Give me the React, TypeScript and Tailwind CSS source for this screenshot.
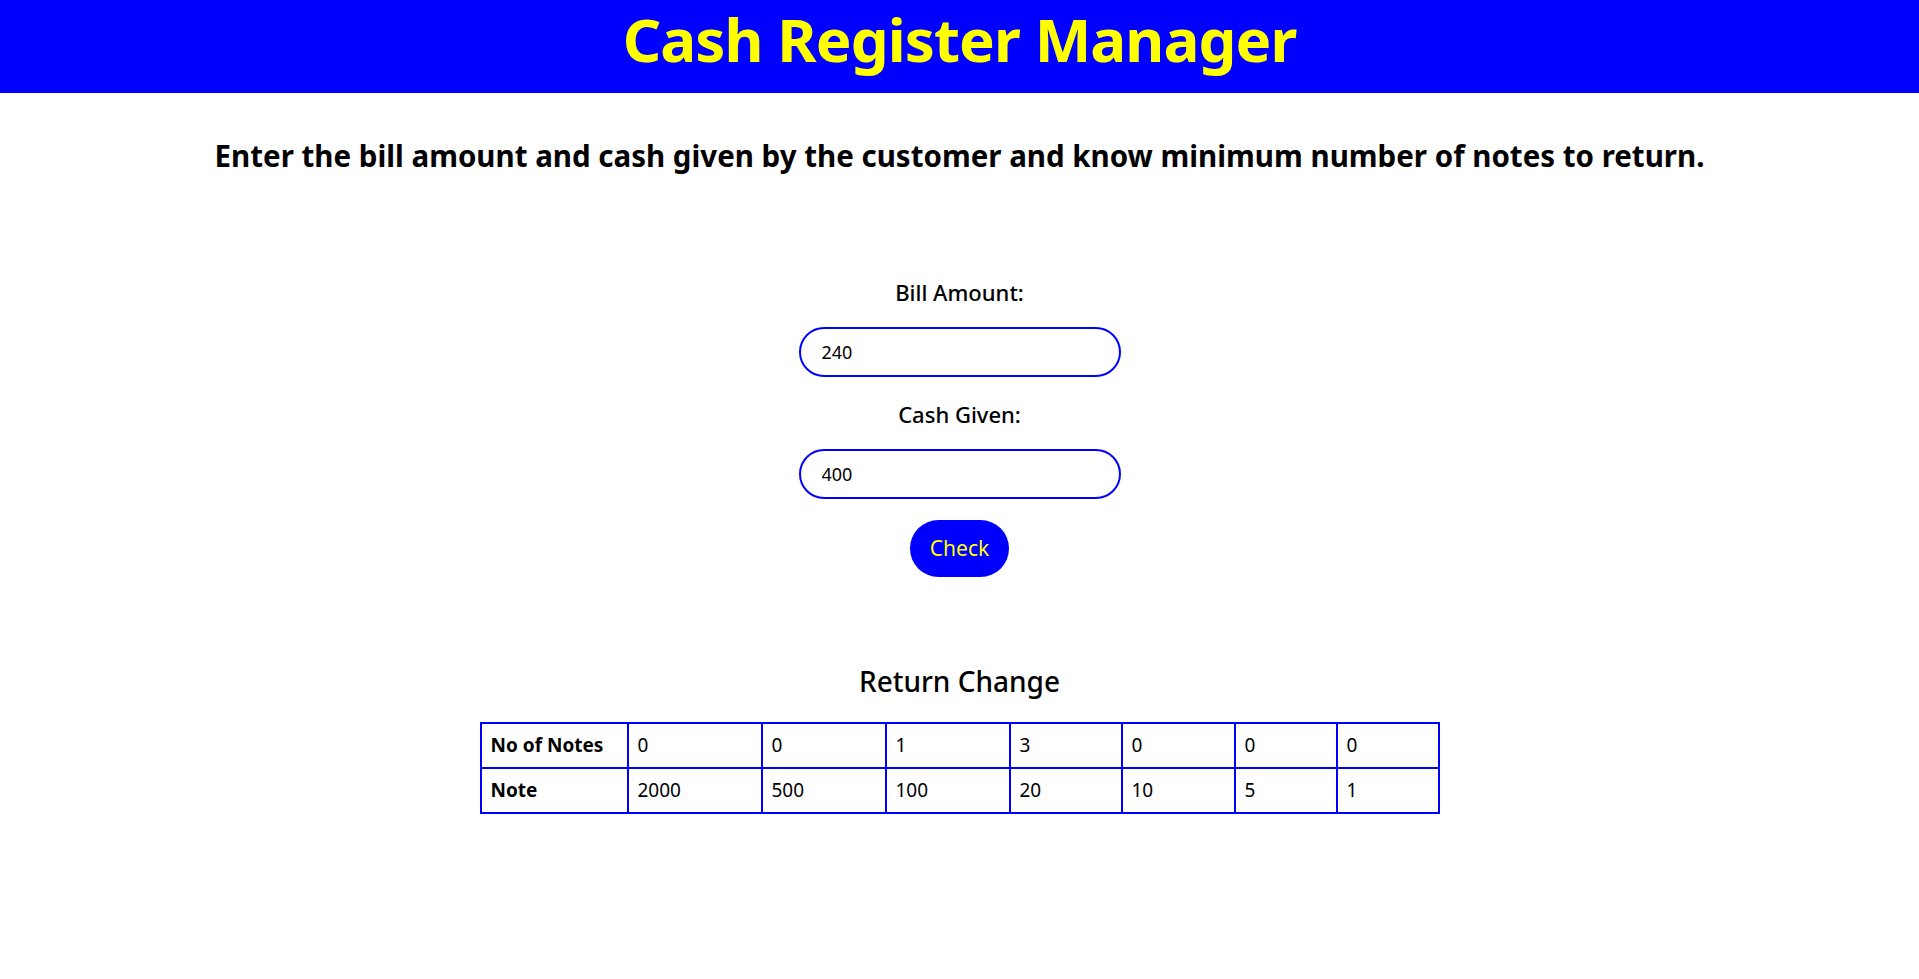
import React, { useState } from "react";

const NOTES = [2000, 500, 100, 20, 10, 5, 1];
const COL_WIDTHS = ["w-[147px]", "w-[134px]", "w-[124px]", "w-[124px]", "w-[112px]", "w-[113px]", "w-[102px]", "w-[102px]"];

function countNotes(bill: number, cash: number) {
  let rest = cash - bill;
  return NOTES.map((note) => {
    if (rest <= 0) return 0;
    const n = Math.floor(rest / note);
    rest = rest % note;
    return n;
  });
}

export default function App() {
  const [bill, setBill] = useState("240");
  const [cash, setCash] = useState("400");
  const [counts, setCounts] = useState<number[]>(countNotes(240, 400));

  const check = () => setCounts(countNotes(Number(bill), Number(cash)));

  return (
    <div className="min-h-screen bg-white text-black font-['Noto_Sans',sans-serif]">
      {/* Header */}
      <header className="h-[93px] bg-[#0000ff] pt-[7px]">
        <h1 className="text-center text-[60px] leading-[64px] tracking-[-0.9px] font-bold text-[#ffff00]">
          Cash Register Manager
        </h1>
      </header>

      <main className="flex flex-col items-center">
        <h2 className="mt-[44px] text-[29.5px] leading-[38px] font-bold">
          Enter the bill amount and cash given by the customer and know minimum number of notes to return.
        </h2>

        {/* Form */}
        <label htmlFor="bill" className="mt-[102px] text-[22px] leading-[30px] font-medium">
          Bill Amount:
        </label>
        <input
          id="bill"
          value={bill}
          onChange={(e) => setBill(e.target.value)}
          className="mt-[20px] w-[322px] h-[50px] rounded-full border-2 border-[#0000ff] px-[21px] text-[18px] outline-none"
        />
        <label htmlFor="cash" className="mt-[22px] text-[22px] leading-[30px] font-medium">
          Cash Given:
        </label>
        <input
          id="cash"
          value={cash}
          onChange={(e) => setCash(e.target.value)}
          className="mt-[20px] w-[322px] h-[50px] rounded-full border-2 border-[#0000ff] px-[21px] text-[18px] outline-none"
        />
        <button
          onClick={check}
          className="mt-[21px] w-[99px] h-[57px] rounded-full bg-[#0000ff] text-[#ffff00] text-[21px]"
        >
          Check
        </button>

        {/* Result */}
        <h3 className="mt-[85px] text-[28px] leading-[38px] font-medium">Return Change</h3>
        <table className="mt-[22px] table-fixed border-collapse border-2 border-[#0000ff] text-[19px] leading-[27px]">
          <tbody>
            <tr>
              <th className={`${COL_WIDTHS[0]} border-2 border-[#0000ff] px-[9px] py-[8px] text-left font-bold`}>
                No of Notes
              </th>
              {counts.map((c, i) => (
                <td key={i} className={`${COL_WIDTHS[i + 1]} border-2 border-[#0000ff] px-[9px] py-[8px]`}>
                  {c}
                </td>
              ))}
            </tr>
            <tr>
              <th className="border-2 border-[#0000ff] px-[9px] py-[8px] text-left font-bold">Note</th>
              {NOTES.map((n) => (
                <td key={n} className="border-2 border-[#0000ff] px-[9px] py-[8px]">
                  {n}
                </td>
              ))}
            </tr>
          </tbody>
        </table>
      </main>
    </div>
  );
}
